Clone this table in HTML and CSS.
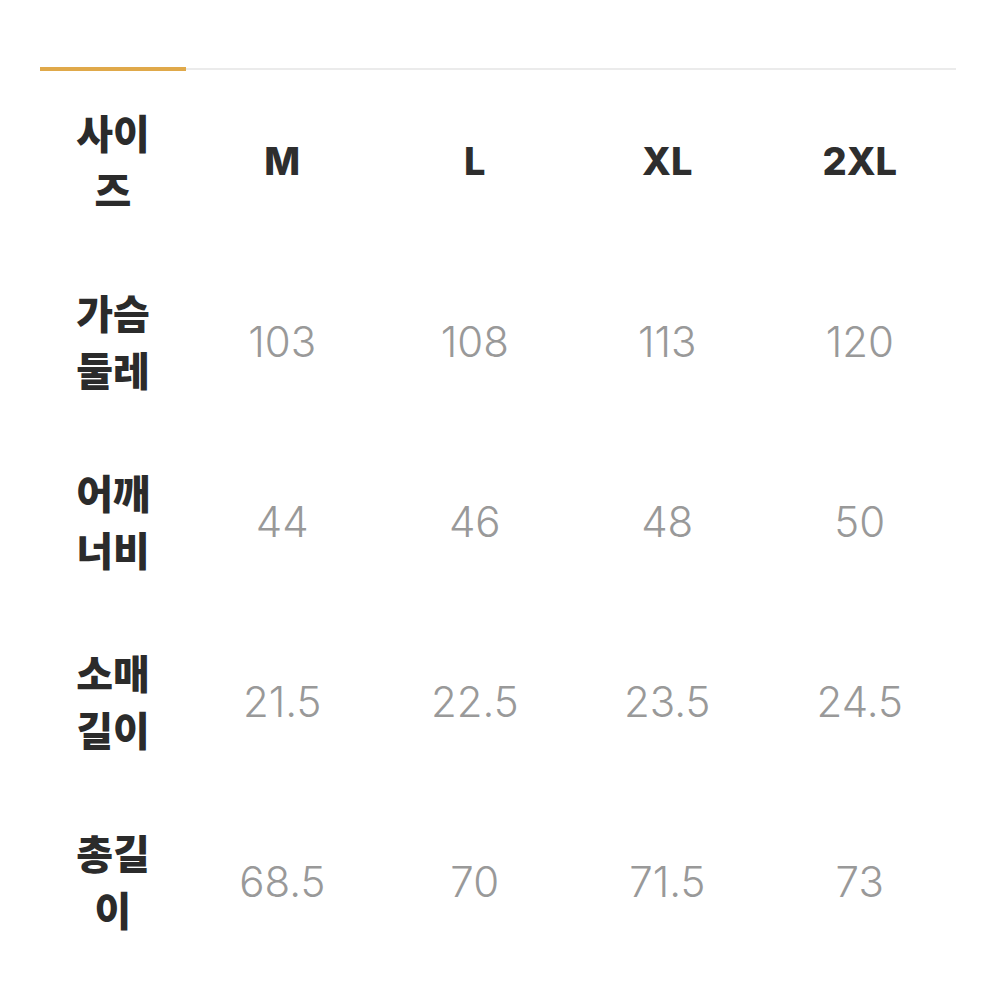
FILE: index.html
```html
<!DOCTYPE html>
<html lang="ko">
<head>
<meta charset="utf-8">
<link rel="stylesheet" href="styles.css">
</head>
<body>
<div class="wrap">
  <div class="tabline"><div class="tab-active"></div><div class="tab-rest"></div></div>
  <div class="table">
    <div class="row head">
      <div class="label"><span>사이즈</span></div>
      <div class="cell">M</div><div class="cell">L</div><div class="cell">XL</div><div class="cell">2XL</div>
    </div>
    <div class="row">
      <div class="label"><span>가슴둘레</span></div>
      <div class="cell">103</div><div class="cell">108</div><div class="cell">113</div><div class="cell">120</div>
    </div>
    <div class="row">
      <div class="label"><span>어깨너비</span></div>
      <div class="cell">44</div><div class="cell">46</div><div class="cell">48</div><div class="cell">50</div>
    </div>
    <div class="row">
      <div class="label"><span>소매길이</span></div>
      <div class="cell">21.5</div><div class="cell">22.5</div><div class="cell">23.5</div><div class="cell">24.5</div>
    </div>
    <div class="row">
      <div class="label"><span>총길이</span></div>
      <div class="cell">68.5</div><div class="cell">70</div><div class="cell">71.5</div><div class="cell">73</div>
    </div>
  </div>
</div>
</body>
</html>
```
FILE: styles.css
```css
* { box-sizing: border-box; }
html, body { margin: 0; padding: 0; background: #fff; }
body { font-family: Inter, "Noto Sans CJK KR", sans-serif; }
.wrap { padding: 67px 33px 0 40px; }
.tabline { display: flex; align-items: center; height: 4px; }
.tab-active { width: 146px; height: 4px; background: #e0a94a; }
.tab-rest { flex: 1; height: 2px; background: #ebebeb; }
.table { display: flex; flex-direction: column; }
.row { display: grid; grid-template-columns: 146px repeat(4, 1fr); height: 180px; align-items: center; }
.label { display: flex; justify-content: center; text-align: center; }
.label span {
  display: block; width: 84px;
  font-family: "Noto Sans CJK KR", sans-serif; font-weight: 900;
  font-size: 40px; line-height: 57px; color: #2b2b2b;
}
.cell { text-align: center; font-size: 42px; font-weight: 300; color: #999; letter-spacing: 0; }
.head .cell { font-weight: 800; color: #2e2e2e; font-size: 38px; }
```
